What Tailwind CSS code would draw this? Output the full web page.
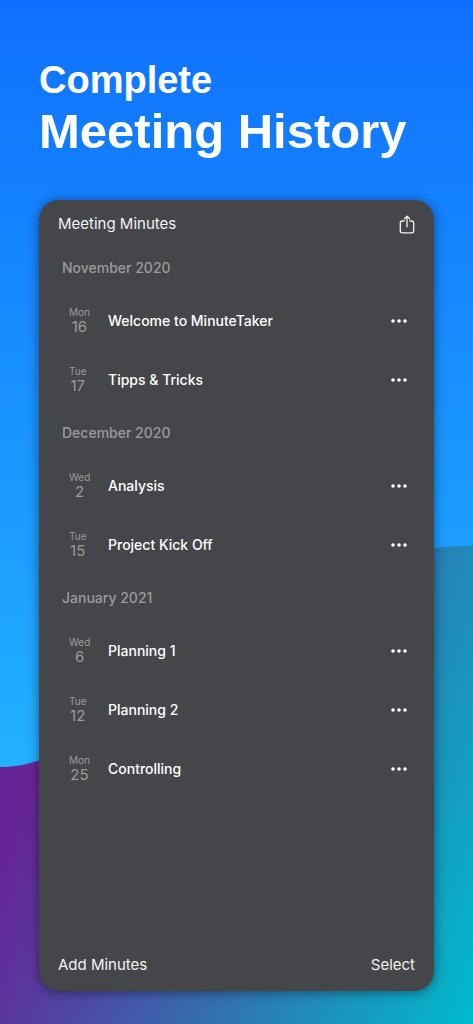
<!DOCTYPE html>
<html lang="en">
<head>
<meta charset="utf-8">
<meta name="viewport" content="width=device-width, initial-scale=1">
<title>Meeting History</title>
<script src="https://cdn.jsdelivr.net/npm/@tailwindcss/browser@4"></script>
</head>
<body class="font-[Inter,sans-serif]">
<div class="relative isolate flex min-h-screen flex-col px-[39px] pt-[58px] pb-[33px]">
  <svg class="absolute inset-0 -z-10 h-full w-full" viewBox="0 0 473 1024" preserveAspectRatio="none" aria-hidden="true">
    <defs>
      <linearGradient id="sky" x1="0" y1="0" x2="0" y2="767" gradientUnits="userSpaceOnUse">
        <stop offset="0" stop-color="#0f70ff"/><stop offset="1" stop-color="#22b1ff"/>
      </linearGradient>
      <linearGradient id="wave" x1="0" y1="880" x2="463" y2="1051" gradientUnits="userSpaceOnUse">
        <stop offset="0" stop-color="#662597"/><stop offset="1" stop-color="#00bbcb"/>
      </linearGradient>
    </defs>
    <rect width="473" height="1024" fill="url(#sky)"/>
    <path d="M0 767 C130 767 220 546 473 546 V1024 H0 Z" fill="url(#wave)"/>
  </svg>

  <h1 class="mb-10 font-['Liberation_Sans',Arial,sans-serif] font-bold text-white">
    <span class="block text-[38px] leading-[44px]">Complete</span>
    <span class="block text-[49px] leading-[58px] whitespace-nowrap">Meeting History</span>
  </h1>

  <main class="flex flex-1 flex-col rounded-[20px] bg-[#454649] shadow-[0_1px_12px_rgba(0,0,0,0.45)]">
    <header class="flex h-11 items-center justify-between px-[19px] pt-1 text-[#f2f2f2]">
      <h2 class="text-[15px]">Meeting Minutes</h2>
      <button type="button" aria-label="Share">
        <svg class="block h-[19px] w-4" viewBox="0 0 16 19" fill="none" stroke="currentColor" stroke-width="1.3" stroke-linecap="round" stroke-linejoin="round"><path d="M5 6H3.3Q1.3 6 1.3 8V15.8Q1.3 17.8 3.3 17.8H12.7Q14.7 17.8 14.7 15.8V8Q14.7 6 12.7 6H11M8 11.8V1.3M5.4 3.8L8 1.2L10.6 3.8"/></svg>
      </button>
    </header>

    <section>
      <h3 class="flex h-[47px] items-center pl-[23px] text-sm font-medium text-[#9b9b9d]">November 2020</h3>
      <ul>
        <li class="flex h-[59px] items-center pr-[27px] pl-[30px]">
          <div class="w-[39px] pb-[2px]"><time datetime="2020-11-16" class="inline-flex flex-col items-center align-top text-[#9b9b9d]"><span class="text-[10px] leading-[14px]">Mon</span><span class="text-[15px] leading-4">16</span></time></div>
          <span class="flex-1 text-sm font-medium text-white">Welcome to MinuteTaker</span>
          <button type="button" aria-label="More options for Welcome to MinuteTaker" class="text-white"><svg class="block h-4 w-4" viewBox="0 0 16 16" fill="currentColor"><circle cx="2" cy="8" r="1.8"/><circle cx="8" cy="8" r="1.8"/><circle cx="14" cy="8" r="1.8"/></svg></button>
        </li>
        <li class="flex h-[59px] items-center pr-[27px] pl-[30px]">
          <div class="w-[39px] pb-[2px]"><time datetime="2020-11-17" class="inline-flex flex-col items-center align-top text-[#9b9b9d]"><span class="text-[10px] leading-[14px]">Tue</span><span class="text-[15px] leading-4">17</span></time></div>
          <span class="flex-1 text-sm font-medium text-white">Tipps &amp; Tricks</span>
          <button type="button" aria-label="More options for Tipps &amp; Tricks" class="text-white"><svg class="block h-4 w-4" viewBox="0 0 16 16" fill="currentColor"><circle cx="2" cy="8" r="1.8"/><circle cx="8" cy="8" r="1.8"/><circle cx="14" cy="8" r="1.8"/></svg></button>
        </li>
      </ul>
    </section>

    <section>
      <h3 class="flex h-[47px] items-center pl-[23px] text-sm font-medium text-[#9b9b9d]">December 2020</h3>
      <ul>
        <li class="flex h-[59px] items-center pr-[27px] pl-[30px]">
          <div class="w-[39px] pb-[2px]"><time datetime="2020-12-02" class="inline-flex flex-col items-center align-top text-[#9b9b9d]"><span class="text-[10px] leading-[14px]">Wed</span><span class="text-[15px] leading-4">2</span></time></div>
          <span class="flex-1 text-sm font-medium text-white">Analysis</span>
          <button type="button" aria-label="More options for Analysis" class="text-white"><svg class="block h-4 w-4" viewBox="0 0 16 16" fill="currentColor"><circle cx="2" cy="8" r="1.8"/><circle cx="8" cy="8" r="1.8"/><circle cx="14" cy="8" r="1.8"/></svg></button>
        </li>
        <li class="flex h-[59px] items-center pr-[27px] pl-[30px]">
          <div class="w-[39px] pb-[2px]"><time datetime="2020-12-15" class="inline-flex flex-col items-center align-top text-[#9b9b9d]"><span class="text-[10px] leading-[14px]">Tue</span><span class="text-[15px] leading-4">15</span></time></div>
          <span class="flex-1 text-sm font-medium text-white">Project Kick Off</span>
          <button type="button" aria-label="More options for Project Kick Off" class="text-white"><svg class="block h-4 w-4" viewBox="0 0 16 16" fill="currentColor"><circle cx="2" cy="8" r="1.8"/><circle cx="8" cy="8" r="1.8"/><circle cx="14" cy="8" r="1.8"/></svg></button>
        </li>
      </ul>
    </section>

    <section>
      <h3 class="flex h-[47px] items-center pl-[23px] text-sm font-medium text-[#9b9b9d]">January 2021</h3>
      <ul>
        <li class="flex h-[59px] items-center pr-[27px] pl-[30px]">
          <div class="w-[39px] pb-[2px]"><time datetime="2021-01-06" class="inline-flex flex-col items-center align-top text-[#9b9b9d]"><span class="text-[10px] leading-[14px]">Wed</span><span class="text-[15px] leading-4">6</span></time></div>
          <span class="flex-1 text-sm font-medium text-white">Planning 1</span>
          <button type="button" aria-label="More options for Planning 1" class="text-white"><svg class="block h-4 w-4" viewBox="0 0 16 16" fill="currentColor"><circle cx="2" cy="8" r="1.8"/><circle cx="8" cy="8" r="1.8"/><circle cx="14" cy="8" r="1.8"/></svg></button>
        </li>
        <li class="flex h-[59px] items-center pr-[27px] pl-[30px]">
          <div class="w-[39px] pb-[2px]"><time datetime="2021-01-12" class="inline-flex flex-col items-center align-top text-[#9b9b9d]"><span class="text-[10px] leading-[14px]">Tue</span><span class="text-[15px] leading-4">12</span></time></div>
          <span class="flex-1 text-sm font-medium text-white">Planning 2</span>
          <button type="button" aria-label="More options for Planning 2" class="text-white"><svg class="block h-4 w-4" viewBox="0 0 16 16" fill="currentColor"><circle cx="2" cy="8" r="1.8"/><circle cx="8" cy="8" r="1.8"/><circle cx="14" cy="8" r="1.8"/></svg></button>
        </li>
        <li class="flex h-[59px] items-center pr-[27px] pl-[30px]">
          <div class="w-[39px] pb-[2px]"><time datetime="2021-01-25" class="inline-flex flex-col items-center align-top text-[#9b9b9d]"><span class="text-[10px] leading-[14px]">Mon</span><span class="text-[15px] leading-4">25</span></time></div>
          <span class="flex-1 text-sm font-medium text-white">Controlling</span>
          <button type="button" aria-label="More options for Controlling" class="text-white"><svg class="block h-4 w-4" viewBox="0 0 16 16" fill="currentColor"><circle cx="2" cy="8" r="1.8"/><circle cx="8" cy="8" r="1.8"/><circle cx="14" cy="8" r="1.8"/></svg></button>
        </li>
      </ul>
    </section>

    <footer class="mt-auto flex h-[52px] items-center justify-between px-[19px] text-[15px] text-[#f2f2f2]">
      <button type="button">Add Minutes</button>
      <button type="button">Select</button>
    </footer>
  </main>
</div>
</body>
</html>
